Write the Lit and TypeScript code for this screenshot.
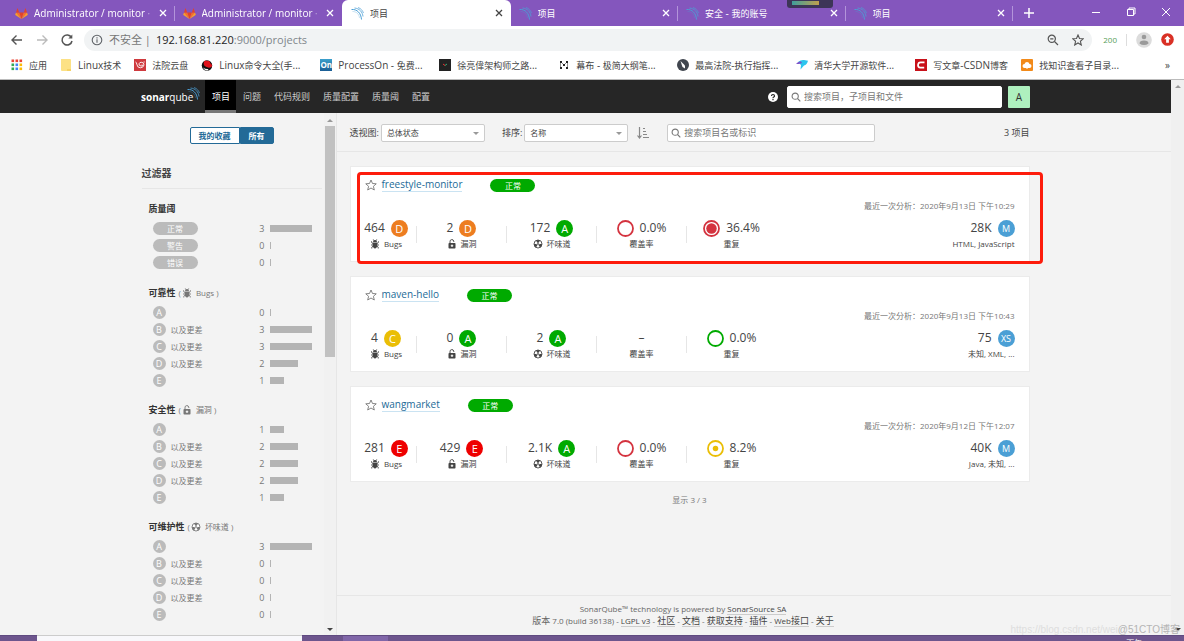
import { LitElement, html, css, svg, nothing } from "lit";
import { customElement } from "lit/decorators.js";
import { classMap } from "lit/directives/class-map.js";
import { styleMap } from "lit/directives/style-map.js";

type Rating = "A" | "B" | "C" | "D" | "E";
interface Project {
  name: string;
  bugs: [string, Rating];
  vulns: [string, Rating];
  smells: [string, Rating];
  coverage: string | null;
  dup: string;
  dupLevel: "ok" | "mid" | "bad";
  date: string;
  size: [string, string];
  langs: string;
  marked?: boolean;
}

const projects: Project[] = [
  { name: "freestyle-monitor", bugs: ["464", "D"], vulns: ["2", "D"], smells: ["172", "A"], coverage: "0.0%", dup: "36.4%", dupLevel: "bad", date: "2020年9月13日 下午10:29", size: ["28K", "M"], langs: "HTML, JavaScript", marked: true },
  { name: "maven-hello", bugs: ["4", "C"], vulns: ["0", "A"], smells: ["2", "A"], coverage: null, dup: "0.0%", dupLevel: "ok", date: "2020年9月13日 下午10:43", size: ["75", "XS"], langs: "未知, XML, ..." },
  { name: "wangmarket", bugs: ["281", "E"], vulns: ["429", "E"], smells: ["2.1K", "A"], coverage: "0.0%", dup: "8.2%", dupLevel: "mid", date: "2020年9月12日 下午12:07", size: ["40K", "M"], langs: "Java, 未知, ..." },
];

const waves = (color: string) => html`<svg class="i13" viewBox="0 0 26 26" fill="none" stroke=${color} stroke-width="2">
  <path d="M1 5c11-1 19 7 20 20"/><path d="M7 2c10 1 16 8 17 17" stroke-width="1.6"/><path d="M14 1c6 2 9 6 11 11" stroke-width="1.4"/><path d="M3 9c8 0 13 5 14 13" stroke-width="1" opacity=".6"/></svg>`;
const fox = html`<svg class="i13" viewBox="0 0 26 26"><path fill="#e24329" d="M13 24L17.700 11H8.300z"/><path fill="#fc6d26" d="M13 24L8.300 11H2zM13 24l4.700-13H24z"/><path fill="#fca326" d="M2 11L.5 15.200c-.1.400 0 .8.300 1L13 24zM24 11l1.500 4.200c.1.400 0 .8-.3 1L13 24z"/><path fill="#e24329" d="M2 11h6.300L5.500 3c-.1-.4-.6-.4-.8 0zM24 11h-6.300l2.800-8c.1-.4.600-.4.800 0z"/></svg>`;
const cross = html`<svg class="i8" viewBox="0 0 8 8" stroke="currentColor" stroke-width="1.300"><path d="M1 1l6 6M7 1L1 7"/></svg>`;
const bug = html`<svg class="i10" viewBox="0 0 20 20" fill="currentColor"><path d="M6 6.200a4 4 0 0 1 8 0zM5.500 7.200h9v5.300c0 3.500-2 6.500-4.500 6.500s-4.500-3-4.500-6.500z"/><path d="M6.500 .8l2.200 3M13.500 .8l-2.200 3M3 4.500l.5 3L6 9M17 4.500l-.5 3L14 9M2 12h4M18 12h-4M3.500 19l.3-3L6.500 14M16.500 19l-.3-3L13.500 14" stroke="currentColor" stroke-width="1.700" fill="none"/></svg>`;
const lock = html`<svg class="i10" viewBox="0 0 20 20"><path d="M6 9V5.500a3.800 3.800 0 0 1 7.500-1.200V6" fill="none" stroke="currentColor" stroke-width="1.900"/><rect x="3" y="8" width="14" height="11" rx="1.500" fill="currentColor"/><path d="M10 11v5M7.500 13.500h5" stroke="#fff" stroke-width="2"/></svg>`;
const smell = html`<svg class="i10" viewBox="0 0 20 20"><circle cx="10" cy="10" r="8" fill="#fff" stroke="currentColor" stroke-width="1.800"/><path fill="currentColor" d="M10 10L6 3.200a8 8 0 0 1 8 0zM10 10h8a8 8 0 0 1-4 6.900zM10 10l-4 6.900A8 8 0 0 1 2 10z"/><circle cx="10" cy="10" r="2.400" fill="currentColor" stroke="#fff"/></svg>`;
const lens = html`<svg class="i10" viewBox="0 0 10 10" fill="none" stroke="#777" stroke-width="1.100"><circle cx="4.200" cy="4.200" r="3.100"/><path d="M6.500 6.500L9.300 9.300"/></svg>`;
const star = html`<svg class="i12" viewBox="0 0 24 24" fill="none" stroke="currentColor" stroke-width="1.800" stroke-linejoin="round"><path d="M12 2l3 7 7.500.6-5.700 5 1.800 7.400L12 18l-6.600 4 1.800-7.400-5.700-5L9 9z"/></svg>`;

const ring = (level: string) => {
  const c = level === "ok" ? "#00aa00" : level === "mid" ? "#eabe06" : "#d4333f";
  return html`<svg class="ring" viewBox="0 0 34 34"><circle cx="17" cy="17" r="15" fill="#fff" stroke=${c} stroke-width="3.600"/>
    ${level === "mid" ? svg`<circle cx="17" cy="17" r="5.500" fill=${c}/>` : level === "bad" ? svg`<circle cx="17" cy="17" r="10.500" fill=${c}/>` : nothing}</svg>`;
};

/* Wraps runs of Chinese characters so they can be sized apart from Latin text. */
const mixed = (s: string) =>
  s.split(/([\u3000-\u9fff]+)/).filter(Boolean).map((p) => (/[\u3000-\u9fff]/.test(p) ? html`<span class="han">${p}</span>` : p));

const bookmarks = [
  { t: "应用", i: html`<svg class="i12" viewBox="0 0 12 12">${["#ea4335", "#ea4335", "#ea4335", "#34a853", "#4285f4", "#fbbc05", "#34a853", "#4285f4", "#fbbc05"].map((c, k) => svg`<rect x=${(k % 3) * 4 + 0.5} y=${Math.floor(k / 3) * 4 + 0.5} width="2.600" height="2.600" fill=${c}/>`)}</svg>` },
  { t: "Linux技术", i: html`<svg class="i12" viewBox="0 0 12 12"><path fill="#fce185" d="M1 0h9a1 1 0 0 1 1 1v11H2a1 1 0 0 1-1-1z"/><path fill="#f5d266" d="M7 10h4v2H7z"/></svg>` },
  { t: "法院云盘", i: html`<svg class="i12" viewBox="0 0 12 12"><rect width="12" height="12" fill="#cf3a3e"/><path d="M1.500 3q1 0 1.300 2.200Q3.300 8.800 6.300 8.800T10 6q0-2.500-2.200-2.700Q5.500 3 5 4.800T7 7t1-1.500M9.500 3h1.200" fill="none" stroke="#fff" stroke-width=".9"/></svg>` },
  { t: "Linux命令大全(手...", wide: true, i: html`<svg class="i12" viewBox="0 0 24 24"><circle cx="12" cy="13" r="10.500" fill="#111"/><path fill="#e0121a" d="M6 5q3-3 6-1 6-2 7 5 5 3 2 7-6 3-12-1Q4 13 6 5z"/><path fill="#fff" d="M4 17q5 4 11 3l-2 3q-6 0-9-6z"/></svg>` },
  { t: "ProcessOn - 免费...", wide: true, i: html`<span class="on">On</span>` },
  { t: "徐亮偉架构师之路...", wide: true, i: html`<svg class="i12" viewBox="0 0 12 12"><rect width="12" height="12" fill="#222"/><path d="M4 5l2 1.500" stroke="#e33"/><path d="M8 5L6 6.500" stroke="#3a7"/></svg>` },
  { t: "幕布 - 极简大纲笔...", wide: true, i: html`<svg class="i12" viewBox="0 0 12 12" fill="#222"><path d="M2 2h2v2H2zM2 8h2v2H2zM8 2h2v2H8zM8 8h2v2H8zM5 5h2v2H5z"/><path d="M2.500 3v6M9.500 3v6M3 3l3 3 3-3" stroke="#222" stroke-width=".5" fill="none"/></svg>` },
  { t: "最高法院-执行指挥...", wide: true, i: html`<svg class="i12" viewBox="0 0 12 12"><circle cx="6" cy="6" r="6" fill="#40464e"/><path fill="#fff" d="M3.500 2l4.500 4.500v3L5.500 8z"/></svg>` },
  { t: "清华大学开源软件...", wide: true, i: html`<svg class="i12" viewBox="0 0 12 12"><path fill="#2cc5ee" d="M2 3q3-2.500 6-2l4 .8Q11 6 8 6.500L4.500 10.500 5 6z"/><path fill="#7b52c9" d="M0 5q2-3 5-2.500L6 4 3 5z"/></svg>` },
  { t: "写文章-CSDN博客", i: html`<svg class="i12" viewBox="0 0 12 12"><rect width="12" height="12" fill="#c8111a"/><path d="M9.500 3.400H5.500Q3.300 3.400 3 6q0 2.600 2.200 2.600h4" fill="none" stroke="#fff" stroke-width="1.700"/></svg>` },
  { t: "找知识查看子目录...", i: html`<svg class="i12" viewBox="0 0 12 12"><rect width="12" height="12" rx="1" fill="#f28a1a"/><path fill="#fff" d="M3.500 9a2 2 0 0 1 0-4 2.600 2.600 0 0 1 5 0 2 2 0 0 1 0 4H7L6 10 5 9z"/></svg>` },
];

const tabs = [
  { t: "Administrator / monitor · G", fox: true },
  { t: "Administrator / monitor · G", fox: true },
  { t: "项目", active: true },
  { t: "项目" },
  { t: "安全 - 我的账号" },
  { t: "项目" },
];

const facets = [
  { t: "可靠性", icon: bug, sub: "Bugs", n: [0, 3, 3, 2, 1] },
  { t: "安全性", icon: lock, sub: "漏洞", n: [1, 2, 2, 2, 1] },
  { t: "可维护性", icon: smell, sub: "坏味道", n: [3, 0, 0, 0, 0] },
];

@customElement("app-root")
export class AppRoot extends LitElement {
  static styles = css`
    :host { display: flex; flex-direction: column; height: 100vh; overflow: hidden; background: #f3f3f3; color: #444;
      font: 8px/12px "Open Sans", "Noto Sans CJK SC", sans-serif; }
    * { box-sizing: border-box; }
    svg { display: block; flex: none; }
    a { color: inherit; text-decoration: none; }
    button, input, select { font: inherit; color: inherit; margin: 0; padding: 0; border: 0; background: none; outline: 0; }
    ul { list-style: none; margin: 0; padding: 0; }
    h2, h3 { margin: 0; }
    .i8 { width: 8px; height: 8px; } .i10 { width: 10px; height: 10px; } .i12 { width: 12px; height: 12px; } .i13 { width: 13px; height: 13px; }
    .i16 { width: 16px; height: 16px; }
    .han { font-size: 9px; }

    .tabs { position: relative; display: flex; flex: none; height: 26px; background: #8456bd; color: #fff; font-size: 10px; }
    .strip { display: flex; width: calc(100% - 171px); padding-left: 7px; }
    .tab { flex: 1 1 0; min-width: 0; display: flex; align-items: center; gap: 6px; padding: 0 8px; position: relative; }
    .tab.line::after { content: ""; position: absolute; right: 0; top: 6px; height: 15px; width: 1px; background: #b394da; }
    .tab.active { background: #fff; color: #444; border-radius: 6px 6px 0 0; padding-left: 9px; }
    .label { flex: 1; overflow: hidden; white-space: nowrap; }
    .label.fade { mask-image: linear-gradient(90deg, #000 92%, transparent); }
    .plus { padding: 0 11px; display: flex; align-items: center; }
    .win { margin-left: auto; display: flex; align-items: center; gap: 25px; padding: 0 13px 3px 0; }
    .widget { position: absolute; left: 787px; top: 0; width: 46px; height: 8px; border-radius: 0 0 3px 3px; background: #3d3557; padding: 1px 5px; }
    .widget i { display: block; width: 27px; height: 4px; background: linear-gradient(90deg, #3f9e9b, #c0a04e); }

    .bar { flex: none; height: 27px; background: #fff; display: flex; align-items: center; gap: 9px; padding: 0 10px 0 9px; color: #777; }
    .bar button { display: flex; }
    .url { flex: 1; height: 22px; border-radius: 11px; background: #f1f3f4; display: flex; align-items: center; gap: 6px; padding: 0 8px 0 7px; margin-right: 2px; }
    .addr { flex: 1; font-size: 11px; color: #80868b; } .addr b { font-weight: 400; color: #222; }
    .insecure { font-size: 11px; white-space: nowrap; margin-right: -1px; }
    .url .i12 + .i12 { margin-left: 7px; }
    .ext { color: #57a05a; font-size: 8px; }
    .vr { width: 1px; height: 12px; background: #ddd; }

    .marks { flex: none; height: 27px; display: flex; align-items: center; background: #fff; padding: 0 0 2px 11px; border-bottom: 1px solid #bbb; font-size: 10px; color: #444; }
    .mark { flex: none; display: flex; align-items: center; gap: 6px; padding-right: 13px; white-space: nowrap; }
    .mark.wide { width: 119px; padding-right: 0; }
    .on { width: 12px; height: 12px; background: linear-gradient(#3ba0cc, #1a5d94); color: #fff; font: bold 8px/12px "Open Sans", sans-serif; text-align: center; }
    .more { margin-left: auto; padding-right: 14px; }

    .page { flex: 1; min-height: 0; display: flex; }
    .doc { flex: 1; min-width: 0; display: flex; flex-direction: column; }
    .scroll { flex: none; width: 13px; background: #f0f0f0; display: flex; flex-direction: column; align-items: center; justify-content: space-between; padding: 5px 0 4px; }
    .up, .down { width: 0; height: 0; border: 3px solid transparent; }
    .up { border-bottom-color: #999; border-top: 0; } .down { border-top-color: #444; border-bottom: 0; }
    .nav { flex: none; height: 33px; background: #262626; }
    .inner { max-width: 889px; height: 33px; margin: 0 auto; display: flex; align-items: center; color: #ccc; font-size: 9px; }
    .logo { display: flex; color: #fff; font-size: 10px; width: 64px; }
    .logo b { font-weight: 700; } .logo span { font-weight: 400; }
    .logo svg { margin: -4px 0 0 -6px; }
    .nav a.item { height: 33px; line-height: 34px; padding: 0 6px 0 7px; white-space: nowrap; }
    .nav a.on-page { background: #000; color: #fff; border-bottom: 3px solid #777; }
    .menu { display: flex; }
    .help { margin-left: auto; margin-right: 9px; }
    .find { display: flex; align-items: center; gap: 3px; background: #fff; border: 1px solid #ddd; border-radius: 2px; padding: 0 3px; }
    .find input { flex: 1; min-width: 0; font-size: 9px; }
    .find input::placeholder { color: #777; opacity: 1; }
    .top-find { width: 215px; height: 22px; border-color: #fff; }
    .avatar { width: 22px; height: 22px; margin-left: 6px; background: #aef0be; color: #333; text-align: center; line-height: 22px; font-size: 10px; border-radius: 1px; }

    .cols { flex: 1; min-height: 0; display: flex; }
    .side { flex: none; width: calc(50% - 249px); display: flex; justify-content: flex-end; border-right: 1px solid #e6e6e6; overflow: hidden; }
    .filters { width: 180px; margin-right: 2px; }
    .rail { width: 12px; display: flex; flex-direction: column; align-items: center; padding: 6px 0 4px; background: #f1f1f1; }
    .rail .thumb { width: 10px; height: 231px; margin-top: 4px; background: #c1c1c1; } .rail .down { margin-top: auto; }
    .toggle { display: flex; justify-content: center; margin-top: 14px; font-weight: 700; }
    .toggle button { height: 17px; padding: 0 8px; border: 1px solid #236a97; color: #236a97; background: #fff; border-radius: 2px 0 0 2px; }
    .toggle button.sel { background: #236a97; color: #fff; border-radius: 0 2px 2px 0; }
    .filters h2 { font-size: 10px; line-height: 16px; font-weight: 600; margin-top: 21px; padding-bottom: 7px; border-bottom: 1px solid #e6e6e6; margin-bottom: 12px; }
    .facet { margin: 0 10px 13px 7px; color: #777; }
    .facet.gate { margin-bottom: 14px; }
    .facet h3 { height: 15px; margin-bottom: 4px; display: flex; align-items: center; gap: 3px; font-size: 8px; font-weight: 400; }
    .facet h3 b { font-size: 9px; color: #333; } .facet h3 svg { margin: 0 1px 0 -2px; }
    .row { height: 17px; display: flex; align-items: center; padding-left: 4px; }
    .pill { width: 45px; height: 13px; border-radius: 7px; background: #bbb; color: #fff; text-align: center; line-height: 13px; }
    .pill.ok { background: #0a0; margin-left: 28px; }
    .dot { width: 13px; height: 13px; border-radius: 50%; background: #bbb; color: #fff; text-align: center; line-height: 13px; margin-right: 5px; font-size: 9px; }
    .num { margin-left: auto; margin-right: 5px; font-size: 9px; }
    .track { width: 42px; } .track i { display: block; height: 7px; min-width: 1px; background: #b4b4b4; }

    .main { flex: 1; min-width: 0; display: flex; flex-direction: column; }
    .tools { flex: none; height: 39px; border-bottom: 1px solid #e6e6e6; padding: 0 13px; }
    .tools div.line { display: flex; align-items: center; max-width: 680px; height: 40px; font-size: 9px; white-space: nowrap; }
    .pick { position: relative; display: flex; margin: 0 17px 0 2px; }
    .pick select { appearance: none; width: 104px; height: 18px; border: 1px solid #ccc; border-radius: 2px; background: #fff; padding: 0 5px; font-size: 8px; }
    .pick::after { content: ""; position: absolute; right: 6px; top: 8px; border: 3px solid transparent; border-top-color: #999; border-bottom: 0; }
    .sort { display: flex; margin: 0 18px 0 -8px; }
    .proj-find { width: 208px; height: 18px; border-color: #ccc; }
    .total { margin-left: auto; }
    .list { flex: 1; min-height: 0; padding: 14px 13px 0; }
    .list > * { max-width: 680px; }
    .card { position: relative; height: 96px; background: #fff; border: 1px solid #ebebeb; padding: 11px 14px 0; }
    .card + .card { margin-top: 14px; }
    .marker { position: absolute; inset: 5px -14px -3px 6px; border: 3px solid #fd1c0c; border-radius: 4px; pointer-events: none; }
    .head { display: flex; align-items: center; height: 14px; color: #777; }
    .head a { font-size: 10px; line-height: 13px; font-weight: 500; color: #236a97; border-bottom: 1px solid #cae3f2; margin-left: 5px; }
    .head button { display: flex; }
    .date { text-align: right; color: #777; margin-top: 8px; }
    .metrics { display: flex; margin: 5px 0 0 -9px; }
    .m { width: 90px; height: 37px; flex: none; text-align: center; position: relative; }
    .m.first { width: 61px; }
    .m.sep::after { content: ""; position: absolute; right: 0; top: 9px; height: 17px; width: 1px; background: #e6e6e6; }
    .v { display: flex; height: 20px; align-items: center; justify-content: center; gap: 6px; font-size: 12px; padding-top: 2px; }
    .k { display: flex; height: 14px; align-items: center; justify-content: center; gap: 4px; }
    .rate { width: 17px; height: 17px; border-radius: 50%; color: #fff; font-size: 11px; line-height: 17px; text-align: center; }
    .ring { width: 17px; height: 17px; }
    .rA { background: #0a0; } .rC { background: #eabe06; } .rD { background: #ed7d20; } .rE { background: #e00; }
    .rate.size { background: #4b9fd5; font-size: 9px; }
    .m.end { margin-left: auto; } .end .v, .end .k { justify-content: flex-end; }
    .shown { text-align: center; color: #777; padding-top: 12px; }
    .foot { flex: none; height: 40px; border-top: 1px solid #e6e6e6; padding-top: 7px; text-align: center; color: #666; }
    .foot div { max-width: 693px; } .foot a { border-bottom: 1px solid #ccc; color: #444; }

    .task { flex: none; height: 6px; display: flex; background: #6d558d; position: relative; border-top: 1px solid #5f4a80; }
    .task i { margin-left: 37px; width: 265px; height: 6px; background: #f8f8fb; margin-top: -1px; border-top: 1px solid #ccc; }
    .task em { margin-left: 41px; width: 45px; background: #8066a8; }
    .clock { margin-left: auto; height: 5px; overflow: hidden; color: #fff; padding: 2px 8px 0 0; line-height: 10px; }
    .water { position: absolute; right: 4px; bottom: 5px; display: flex; font-size: 10px; line-height: 12px; font-family: "Liberation Sans", "Noto Sans CJK SC", sans-serif; color: #dedede; pointer-events: none; }
    .water b { font-weight: 400; color: #b5b5b5; }
  `;

  private metric(v: unknown, k: unknown, cls = "sep") {
    return html`<div class="m ${cls}"><div class="v">${v}</div><div class="k">${k}</div></div>`;
  }
  private rated([n, r]: [string, Rating]) {
    return html`<span>${n}</span><span class="rate r${r}">${r}</span>`;
  }
  private card(p: Project) {
    return html`<article class="card">
      <div class="head"><button aria-label="收藏">${star}</button><a href="#">${p.name}</a><span class="pill ok">正常</span></div>
      <div class="date">最近一次分析：${p.date}</div>
      <div class="metrics">
        ${this.metric(this.rated(p.bugs), html`${bug}<span>Bugs</span>`, "first sep")}
        ${this.metric(this.rated(p.vulns), html`${lock}<span>漏洞</span>`)}
        ${this.metric(this.rated(p.smells), html`${smell}<span>坏味道</span>`)}
        ${this.metric(p.coverage ? html`<svg class="ring" viewBox="0 0 34 34"><circle cx="17" cy="17" r="15" fill="none" stroke="#d4333f" stroke-width="3.600"/></svg><span>${p.coverage}</span>` : html`<span>–</span>`, "覆盖率")}
        ${this.metric(html`${ring(p.dupLevel)}<span>${p.dup}</span>`, "重复", "")}
        ${this.metric(html`<span>${p.size[0]}</span><span class="rate size">${p.size[1]}</span>`, p.langs, "end")}
      </div>
      ${p.marked ? html`<div class="marker"></div>` : nothing}
    </article>`;
  }
  private row(label: unknown, n: number) {
    return html`<li class="row">${label}<span class="num">${n}</span><span class="track"><i style=${styleMap({ width: `${(n / 3) * 100}%` })}></i></span></li>`;
  }

  render() {
    return html`
      <div class="tabs">
        <div class="strip">${tabs.map((t, i) => html`<div class=${classMap({ tab: true, active: !!t.active, line: i !== 1 && i !== 2 })}>
          ${t.fox ? fox : waves("#4b9fd5")}<span class="label ${t.fox ? "fade" : ""}">${mixed(t.t)}</span>${cross}</div>`)}</div>
        <div class="plus"><svg class="i10" viewBox="0 0 10 10" stroke="#fff" stroke-width="1.500"><path d="M5 0v10M0 5h10"/></svg></div>
        <div class="win">
          <svg class="i10" viewBox="0 0 10 10" stroke="#fff"><path d="M1 5.500h8"/></svg>
          <svg class="i10" viewBox="0 0 10 10" stroke="#fff" fill="none"><path d="M1.500 2.500h6v6h-6zM3 2V1h6v6H8"/></svg>
          <svg class="i10" viewBox="0 0 10 10" stroke="#fff"><path d="M1 1l8 8M9 1L1 9"/></svg>
        </div>
        <div class="widget"><i></i></div>
      </div>
      <div class="bar">
        <button aria-label="后退"><svg class="i16" viewBox="0 0 16 16" fill="none" stroke="#555" stroke-width="1.400"><path d="M13 8H3M7.500 3.500L3 8l4.500 4.500"/></svg></button>
        <button aria-label="前进"><svg class="i16" viewBox="0 0 16 16" fill="none" stroke="#bbb" stroke-width="1.400"><path d="M3 8h10M8.500 3.500L13 8l-4.500 4.500"/></svg></button>
        <button aria-label="刷新"><svg class="i16" viewBox="0 0 16 16" fill="none" stroke="#555" stroke-width="1.500"><path d="M12.400 5.500A5 5 0 1 0 13 9"/><path d="M13.300 2.500v4H9.300z" fill="#555" stroke="none"/></svg></button>
        <div class="url">
          <svg class="i12" viewBox="0 0 12 12" fill="none" stroke="#5f6368" stroke-width="1.100"><circle cx="6" cy="6" r="4.800"/><path d="M6 5.300v3.400M6 3.200v1.200"/></svg>
          <span class="insecure">不安全 |</span>
          <span class="addr"><b>192.168.81.220</b>:9000/projects</span>
          <svg class="i12" viewBox="0 0 12 12" fill="none" stroke="#555" stroke-width="1.200"><circle cx="4.800" cy="4.800" r="3.600"/><path d="M7.500 7.500l3.500 3.500M3.200 4.800h3.200"/></svg>
          <svg class="i12" viewBox="0 0 24 24" fill="none" stroke="#555" stroke-width="2.200"><path d="M12 2l3 7 7.500.6-5.700 5 1.800 7.400L12 18l-6.600 4 1.800-7.400-5.700-5L9 9z"/></svg>
        </div>
        <span class="ext">200</span><span class="vr"></span>
        <svg class="i16" viewBox="0 0 16 16"><circle cx="8" cy="8" r="7.800" fill="#dcdcdc"/><circle cx="8" cy="5" r="2.300" fill="#9a9a9a"/><path d="M3.500 11.500q0-3 4.500-3t4.500 3q-2 1.500-4.500 1.500t-4.500-1.500z" fill="#9a9a9a"/></svg>
        <svg class="i13" viewBox="0 0 13 13"><circle cx="6.500" cy="6.500" r="6.300" fill="#d93025"/><path fill="#fff" d="M6.500 2.800L9.800 6.300H7.900v3.400H5.100V6.300H3.200z"/></svg>
      </div>
      <div class="marks">
        ${bookmarks.map((b) => html`<a href="#" class=${classMap({ mark: true, wide: !!b.wide })}>${b.i}<span>${mixed(b.t)}</span></a>`)}
        <span class="more">»</span>
      </div>
      <div class="page">
        <div class="doc">
          <nav class="nav"><div class="inner">
            <a class="logo" href="#"><b>sonar</b><span>qube</span>${waves("#4b9fd5")}</a>
            <div class="menu">${["项目", "问题", "代码规则", "质量配置", "质量阈", "配置"].map((t, i) => html`<a href="#" class=${classMap({ item: true, "on-page": i === 0 })}>${t}</a>`)}</div>
            <svg class="i10 help" viewBox="0 0 10 10"><circle cx="5" cy="5" r="5" fill="#fff"/><path d="M3.500 4Q3.500 2.500 5 2.500T6.500 4Q6.500 4.700 5.700 5T5 6.200M5 7v1.200" fill="none" stroke="#222" stroke-width="1.200"/></svg>
            <label class="find top-find">${lens}<input aria-label="搜索" placeholder="搜索项目，子项目和文件"></label>
            <a class="avatar" href="#">A</a>
          </div></nav>
          <div class="cols">
            <aside class="side">
              <div class="filters">
                <div class="toggle"><button>我的收藏</button><button class="sel">所有</button></div>
                <h2>过滤器</h2>
                <section class="facet gate"><h3><b>质量阈</b></h3><ul>
                  ${["正常", "警告", "错误"].map((t, i) => this.row(html`<span class="pill">${t}</span>`, i ? 0 : 3))}</ul></section>
                ${facets.map((f) => html`<section class="facet"><h3><b>${f.t}</b><span>(</span>${f.icon}<span>${f.sub} )</span></h3><ul>
                  ${f.n.map((n, i) => this.row(html`<span class="dot">${"ABCDE"[i]}</span>${i > 0 && i < 4 ? "以及更差" : nothing}`, n))}</ul></section>`)}
              </div>
              <div class="rail"><span class="up"></span><span class="thumb"></span><span class="down"></span></div>
            </aside>
            <main class="main">
              <div class="tools"><div class="line">
                <label for="view">透视图:</label><span class="pick"><select id="view"><option>总体状态</option></select></span>
                <label for="sort">排序:</label><span class="pick"><select id="sort"><option>名称</option></select></span>
                <button class="sort" aria-label="排序方向"><svg class="i12" viewBox="0 0 12 12" fill="none" stroke="#888" stroke-width="1.200"><path d="M2.500 0v10M.5 8.500l2 2.500 2-2.500M6 1.500h2M6 4.500h3M6 7.500h4M6 10.500h6"/></svg></button>
                <label class="find proj-find">${lens}<input aria-label="搜索项目" placeholder="搜索项目名或标识"></label>
                <span class="total">3 项目</span>
              </div></div>
              <div class="list">${projects.map((p) => this.card(p))}<div class="shown">显示 3 / 3</div></div>
              <footer class="foot"><div>SonarQube™ technology is powered by <a href="#">SonarSource SA</a></div>
                <div>${mixed("版本 7.0 (build 36138)")}${["LGPL v3", "社区", "文档", "获取支持", "插件", "Web接口", "关于"].map((t) => html` - <a href="#">${mixed(t)}</a>`)}</div></footer>
            </main>
          </div>
        </div>
        <div class="scroll"><span class="up"></span><span class="down"></span></div>
      </div>
      <div class="task"><i></i><em></em><span class="clock">下午 10:47:23</span></div>
      <div class="water"><span>https://blog.csdn.net/wei</span><b>@51CTO博客</b></div>
    `;
  }
}
